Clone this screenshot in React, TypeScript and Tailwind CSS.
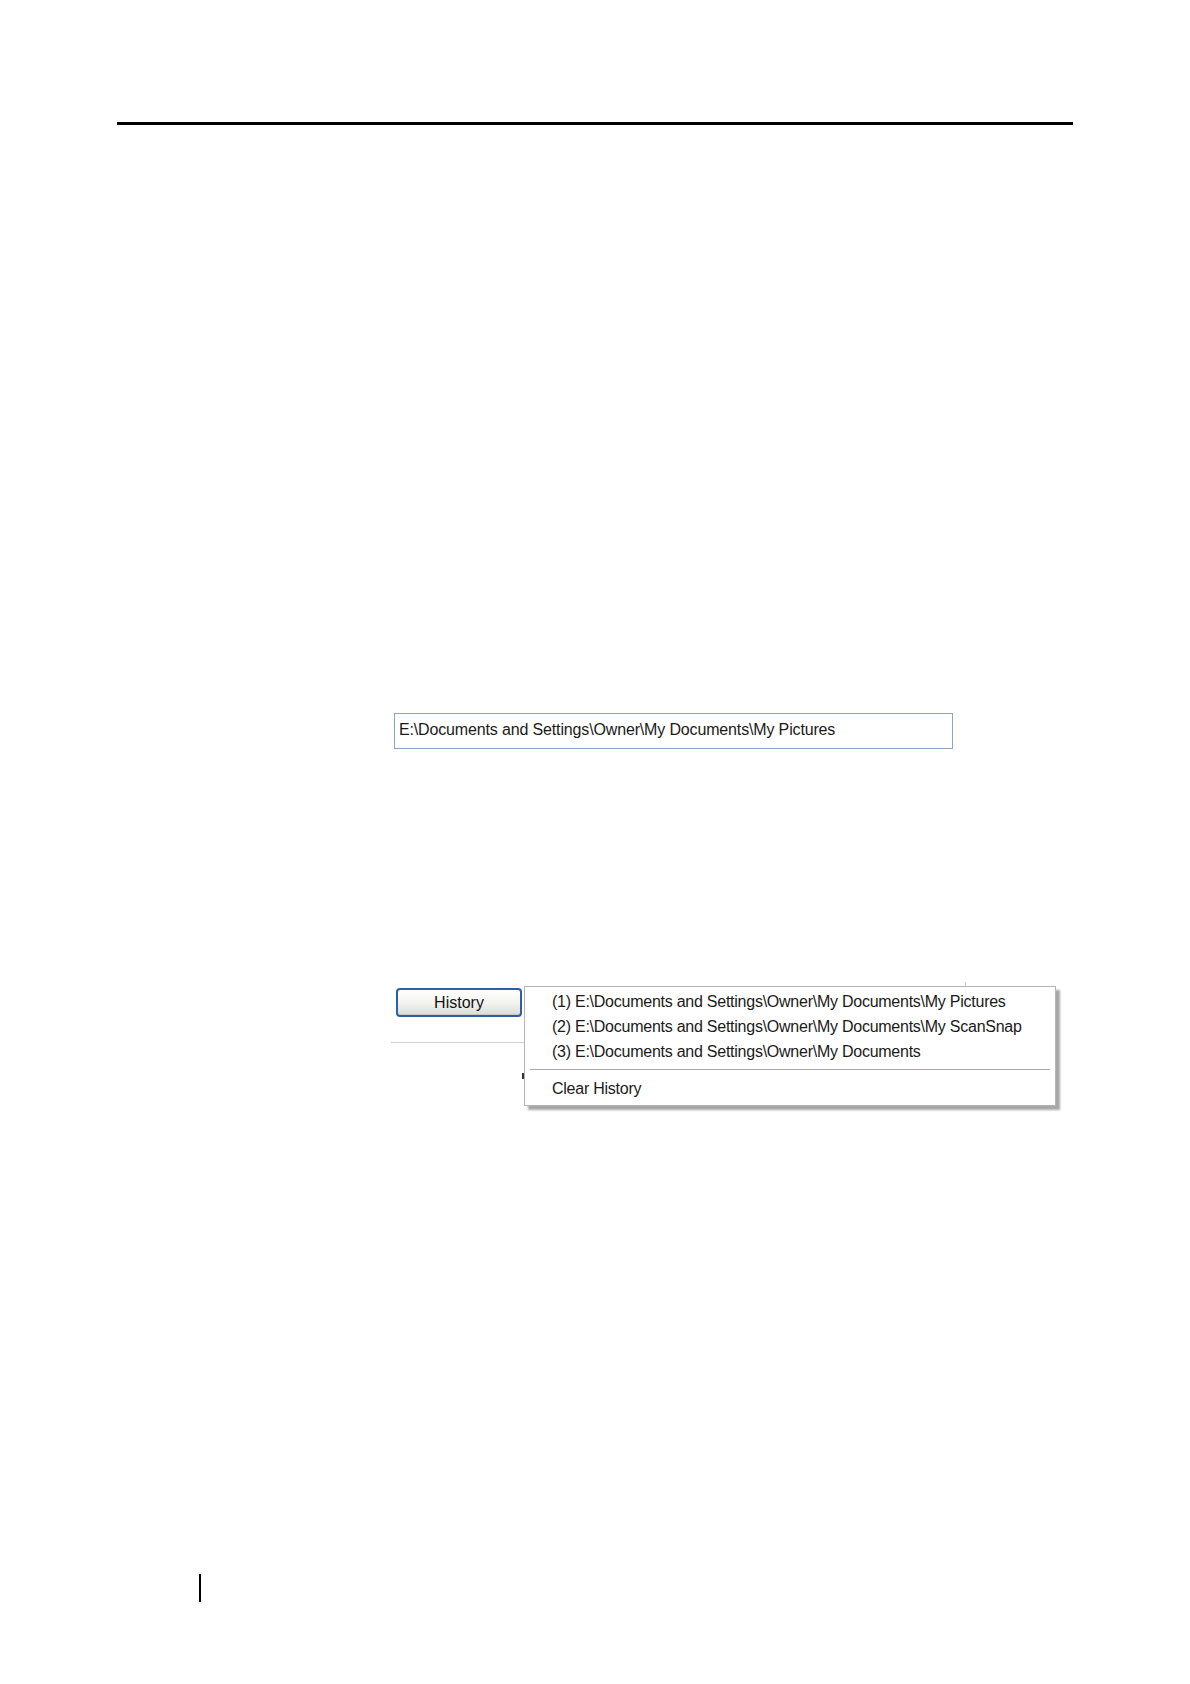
import React from "react";

const font = { fontFamily: '"Liberation Sans", Arial, sans-serif' };

export default function App() {
  const items = [
    "(1) E:\\Documents and Settings\\Owner\\My Documents\\My Pictures",
    "(2) E:\\Documents and Settings\\Owner\\My Documents\\My ScanSnap",
    "(3) E:\\Documents and Settings\\Owner\\My Documents",
  ];
  return (
    <div className="w-[1190px] h-[1684px] bg-white flex flex-col text-[#1a1a1a]" style={font}>
      <div className="mt-[122px] ml-[117px] w-[956px] h-[3px] bg-black" />

      <div className="mt-[588px] ml-[394px] w-[559px] h-[36px] border border-[#8ea3c4] bg-white flex items-center pl-[4px] pb-[2px] text-[16px] tracking-[-0.15px]">
        E:\Documents and Settings\Owner\My Documents\My Pictures
      </div>

      <div className="relative mt-[237px] ml-[391px] w-[134px] h-[120px]">
        <button className="ml-[5px] mt-[2px] w-[126px] h-[29px] rounded-[4px] border-2 border-[#2c5fa8] bg-gradient-to-b from-white via-[#f4f4f0] to-[#dcdcd6] shadow-[inset_0_-1px_0_#c9c9c0] flex items-center justify-center text-[16px] text-[#111]">
          History
        </button>
        <div className="mt-[25px] w-[134px] h-[1px] bg-[#d0d0d0]" />
        <div className="absolute left-[131px] top-[87px] w-[3px] h-[6px] bg-[#333]" />
        <div className="absolute left-[574px] top-[-4px] w-[1px] h-[6px] bg-[#c8c8c8]" />

        <div className="absolute left-[133px] top-0 w-[532px] h-[120px] bg-white border border-[#b4b4b4] shadow-[4px_4px_2px_rgba(0,0,0,0.35)] flex flex-col pt-[2px]">
          {items.map((t) => (
            <div key={t} className="h-[25px] flex items-center pl-[27px] text-[16px] tracking-[-0.25px] whitespace-nowrap">
              {t}
            </div>
          ))}
          <div className="mt-[5px] mx-[5px] h-[2px] border-t border-[#a8a8a8] border-b border-b-white" />
          <div className="mt-[5px] h-[25px] flex items-center pl-[27px] text-[16px] tracking-[-0.25px]">
            Clear History
          </div>
        </div>
      </div>

      <div className="mt-[468px] ml-[199px] w-[2px] h-[28px] bg-black" />
    </div>
  );
}
